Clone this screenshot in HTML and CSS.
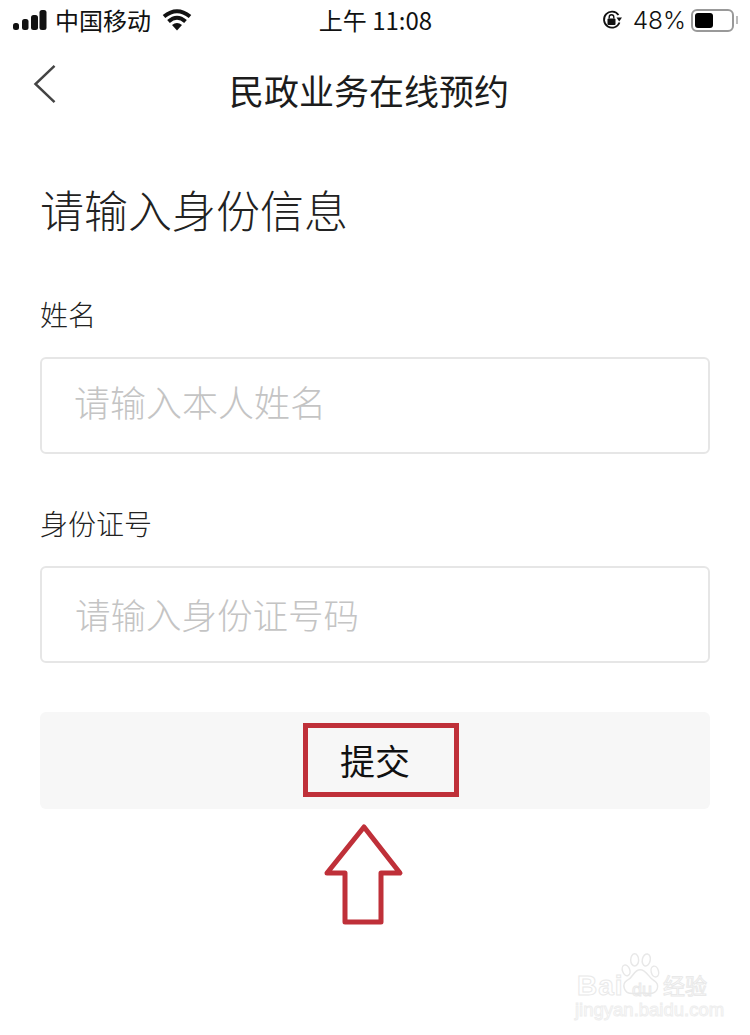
FILE: index.html
```html
<!DOCTYPE html>
<html lang="zh-CN">
<head>
    <meta charset="UTF-8">
    <meta name="viewport" content="width=device-width, initial-scale=1.0">
    <title>民政业务在线预约</title>
    <link rel="stylesheet" href="styles.css">
</head>
<body>

    <div class="status-bar">
        <div class="status-left">
            <svg class="signal" width="36" height="20" viewBox="0 0 36 20">
                <rect x="0" y="13" width="6" height="7" rx="2.5"/>
                <rect x="9" y="9" width="6.5" height="11" rx="2.5"/>
                <rect x="18" y="5" width="7" height="15" rx="2.5"/>
                <rect x="26.5" y="0" width="7" height="20" rx="2.5"/>
            </svg>
            <span class="carrier">中国移动</span>
            <svg class="wifi" width="30" height="22" viewBox="0 0 30 22">
                <path d="M15 21.5 L10 16 Q15 12 20 16 Z"/>
                <path d="M6.5 12.5 Q15 5 23.5 12.5" fill="none" stroke="#111" stroke-width="4"/>
                <path d="M2 7.5 Q15 -3 28 7.5" fill="none" stroke="#111" stroke-width="4"/>
            </svg>
        </div>
        <div class="status-time">上午 11:08</div>
        <div class="status-right">
            <svg class="lock" width="22" height="22" viewBox="0 0 22 22">
                <path d="M18.5 13.5 A8 8 0 1 1 17.5 6" fill="none" stroke="#111" stroke-width="1.8"/>
                <path d="M15.5 8.5 L21 8.5 L18.2 12.5 Z"/>
                <rect x="6.5" y="9.5" width="8" height="6.5" rx="1"/>
                <path d="M8.2 9.5 V8 A2.3 2.3 0 0 1 12.8 8 V9.5" fill="none" stroke="#111" stroke-width="1.4"/>
            </svg>
            <span class="battery-text">48%</span>
            <div class="battery"><div class="battery-level"></div></div>
            <div class="battery-cap"></div>
        </div>
    </div>

    <div class="nav-bar">
        <svg class="back" width="26" height="40" viewBox="0 0 26 42">
            <path d="M23 2 L3 21 L23 40" fill="none" stroke="#444" stroke-width="2.6"/>
        </svg>
        <div class="nav-title">民政业务在线预约</div>
    </div>

    <div class="content">
        <h1>请输入身份信息</h1>

        <div class="field-label first">姓名</div>
        <div class="field-input name-input">请输入本人姓名</div>

        <div class="field-label second">身份证号</div>
        <div class="field-input id-input">请输入身份证号码</div>

        <div class="submit-btn">提交</div>
    </div>

    <!-- красная пометка поверх кнопки -->
    <div class="mark-box"></div>
    <svg class="mark-arrow" width="82" height="106" viewBox="0 0 82 106">
        <path d="M41 4 L77 50 L58 50 L58 99 L22 99 L22 50 L4 50 Z" fill="none" stroke="#bf3039" stroke-width="5" stroke-linejoin="round"/>
    </svg>

    <div class="watermark">
        <svg class="paw" width="44" height="44" viewBox="0 0 72 68">
            <g fill="#fff" stroke="#e8e8e8" stroke-width="2.4">
                <ellipse cx="10" cy="28" rx="6" ry="9" transform="rotate(-20 10 28)"/>
                <ellipse cx="24" cy="11" rx="6.5" ry="10"/>
                <ellipse cx="43" cy="11" rx="6.5" ry="10" transform="rotate(12 43 11)"/>
                <ellipse cx="57" cy="30" rx="6" ry="9" transform="rotate(-15 57 30)"/>
                <path d="M33 27 C22 27 22 40 12 44 C2 50 6 66 20 66 C28 66 38 64 48 66 C62 66 66 52 56 45 C46 40 44 27 33 27 Z"/>
            </g>
        </svg>
        <span class="wm-bai">Bai</span>
        <span class="wm-du">du</span>
        <span class="wm-jy">经验</span>
        <span class="wm-url">jingyan.baidu.com</span>
    </div>

</body>
</html>
```

FILE: styles.css
```css
* {
    box-sizing: border-box;
}

html, body {
    height: 100%;
}

body {
    margin: 0;
    height: 1035px;
    overflow: hidden;
    position: relative;
    background: #fff;
    color: #222;
    font-family: "Noto Sans CJK SC", "Liberation Sans", sans-serif;
}

.status-bar {
    display: grid;
    grid-template-columns: 1fr auto 1fr;
    align-items: center;
    height: 40px;
    padding: 0 12px 0 13px;
    color: #111;
}

.status-left {
    display: flex;
    align-items: center;
}

.signal {
    fill: #111;
    margin-right: 6px;
}

.carrier {
    font-size: 24px;
    line-height: 38px;
}

.wifi {
    fill: #111;
    margin-left: 11px;
}

.status-time {
    font-size: 24px;
    line-height: 40px;
    font-family: "Noto Sans CJK SC", "Noto Sans", sans-serif;
}

.status-right {
    display: flex;
    align-items: center;
    justify-content: flex-end;
}

.lock {
    fill: #111;
    margin-right: 10px;
}

.battery-text {
    font-size: 24.5px;
    line-height: 40px;
    margin-right: 5px;
    font-family: "Inter", "Noto Sans", sans-serif;
    font-weight: 300;
}

.battery {
    width: 43px;
    height: 23px;
    border: 2px solid #999;
    border-radius: 6px;
    padding: 2px;
}

.battery-level {
    width: 18px;
    height: 100%;
    background: #000;
    border-radius: 3px;
}

.battery-cap {
    width: 2px;
    height: 8px;
    margin-left: 2px;
    background: #bbb;
}

.nav-bar {
    display: flex;
    align-items: center;
    height: 92px;
    padding-left: 32px;
}

.back {
    margin-top: -4px;
}

.nav-title {
    margin-left: 171px;
    margin-top: 8px;
    font-size: 35px;
    line-height: 50px;
    color: #1c1c1c;
}

.content {
    padding: 0 40px;
}

h1 {
    margin: 0;
    padding-top: 48px;
    font-size: 44px;
    line-height: 58px;
    font-weight: 300;
    color: #222;
}

.field-label {
    font-size: 28px;
    line-height: 40px;
    font-weight: 300;
    color: #222;
}

.field-label.first {
    margin-top: 56px;
}

.field-label.second {
    margin-top: 49px;
}

.field-input {
    margin-top: 23px;
    height: 97px;
    border: 2px solid #e6e6e6;
    border-radius: 6px;
    font-weight: 300;
    color: #c4c4c4;
}

.name-input {
    padding-left: 32px;
    font-size: 36px;
    line-height: 84px;
}

.id-input {
    padding-left: 33px;
    font-size: 35.5px;
    line-height: 91px;
}

.submit-btn {
    margin-top: 49px;
    height: 97px;
    border-radius: 6px;
    background: #f7f7f7;
    text-align: center;
    font-size: 35px;
    line-height: 95px;
    color: #111;
}

.mark-box {
    position: absolute;
    left: 303px;
    top: 723px;
    width: 156px;
    height: 74px;
    border: 5px solid #bf3039;
}

.mark-arrow {
    position: absolute;
    left: 323px;
    top: 823px;
}

.watermark {
    position: absolute;
    left: 574px;
    top: 950px;
    width: 170px;
    height: 80px;
    color: transparent;
    -webkit-text-stroke: 1px #e9e9e9;
    font-family: "Liberation Sans", sans-serif;
}

.paw {
    position: absolute;
    left: 46px;
    top: 2px;
}

.wm-bai {
    position: absolute;
    left: 3px;
    top: 20px;
    font-size: 28px;
    font-weight: 700;
    letter-spacing: 1px;
}

.wm-du {
    position: absolute;
    left: 58px;
    top: 30px;
    font-size: 18px;
}

.wm-jy {
    position: absolute;
    left: 89px;
    top: 18px;
    font-size: 22px;
    font-family: "Noto Sans CJK SC", sans-serif;
}

.wm-url {
    position: absolute;
    left: 1px;
    top: 49px;
    font-size: 18.5px;
    -webkit-text-stroke-color: #eeeeee;
}
```
